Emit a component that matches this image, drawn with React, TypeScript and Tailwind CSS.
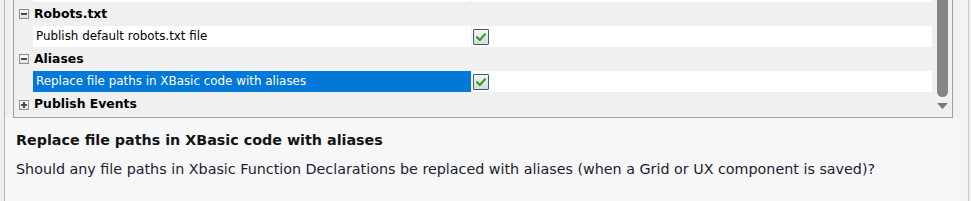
import React from "react";

const gridFont = { fontFamily: '"DejaVu Sans", Verdana, sans-serif' };
const descFont = { fontFamily: '"DejaVu Sans", Verdana, sans-serif' };

function ExpandBox({ open }: { open: boolean }) {
  return (
    <div className="w-[10px] h-[10px] border border-[#8f8f8f] bg-gradient-to-b from-white to-[#e2e2e2] flex items-center justify-center relative">
      <div className="w-[6px] h-[2px] bg-[#4b4b4b]" />
      {!open && <div className="absolute w-[2px] h-[6px] bg-[#4b4b4b]" />}
    </div>
  );
}

function Check() {
  return (
    <div className="w-[16px] h-[16px] border border-[#3d5a7e] rounded-[1px] bg-gradient-to-b from-[#f6f6f6] to-[#d9d9d9] flex items-center justify-center">
      <svg width="12" height="12" viewBox="0 0 12 12">
        <path d="M2 6.2 L4.8 9 L10 3.2" fill="none" stroke="#27a327" strokeWidth="2.2" strokeLinecap="round" strokeLinejoin="round" />
      </svg>
    </div>
  );
}

function Category({ label, open, h }: { label: string; open: boolean; h: string }) {
  return (
    <div className={`flex items-center bg-[#f0f0f0] ${h}`}>
      <div className="w-[19px] flex justify-center pl-[1px]">
        <ExpandBox open={open} />
      </div>
      <span className="pl-[1px] text-[12.4px] font-bold text-black" style={gridFont}>
        {label}
      </span>
    </div>
  );
}

function Property({ label, selected, h }: { label: string; selected?: boolean; h: string }) {
  return (
    <div className={`flex bg-[#f0f0f0] ${h}`}>
      <div className="w-[19px]" />
      <div
        className={`w-[438px] flex items-center pl-[3px] text-[11.9px] ${
          selected ? "bg-[#0078d7] text-white" : "bg-white text-black"
        }`}
        style={gridFont}
      >
        {label}
      </div>
      <div className="w-[1px]" />
      <div className="flex-1 bg-white flex items-center pl-[1px]">
        <Check />
      </div>
    </div>
  );
}

export default function App() {
  return (
    <div className="w-[971px] h-[201px] bg-[#f0f0f0] flex overflow-hidden">
      <div className="w-[4px]" />
      <div className="w-[1px] bg-[#b4b4b4]" />
      <div className="flex-1 flex flex-col bg-[#f7f7f7]">
        <div className="bg-[#f0f0f0] pl-[8px] pr-[7px]">
          <div className="border-l border-r border-b border-[#a0a0a0] flex h-[118px]">
            <div className="flex-1 flex flex-col">
              <div className="flex h-[2px] bg-[#f0f0f0]">
                <div className="w-[19px]" />
                <div className="w-[438px] bg-white" />
                <div className="w-[1px]" />
                <div className="flex-1 bg-white" />
              </div>
              <Category label="Robots.txt" open h="h-[24px]" />
              <Property label="Publish default robots.txt file" h="h-[21px]" />
              <Category label="Aliases" open h="h-[24px]" />
              <Property label="Replace file paths in XBasic code with aliases" selected h="h-[21px]" />
              <Category label="Publish Events" open={false} h="h-[25px]" />
            </div>
            <div className="w-[20px] bg-[#f0f0f0] flex flex-col items-center">
              <div className="w-[11px] h-[97px] bg-[#858585] rounded-b-[6px] ml-[1px]" />
              <svg width="12" height="8" viewBox="0 0 12 8" className="mt-[5px] ml-[1px]">
                <path d="M0 1 H11 L5.5 7 Z" fill="#7a7a7a" />
              </svg>
            </div>
          </div>
        </div>
        <div className="px-[11px] pt-[13px]" style={descFont}>
          <div className="text-[14.3px] font-bold text-[#141414] leading-[19px]">
            Replace file paths in XBasic code with aliases
          </div>
          <div className="mt-[10px] text-[14.3px] text-[#1c1c34] leading-[19px]">
            Should any file paths in Xbasic Function Declarations be replaced with aliases (when a Grid or UX component is saved)?
          </div>
        </div>
      </div>
      <div className="w-[8px] bg-[#f3f3f3]" />
      <div className="w-[1px] bg-[#c8c8c8]" />
      <div className="w-[2px] bg-[#f0f0f0]" />
    </div>
  );
}
